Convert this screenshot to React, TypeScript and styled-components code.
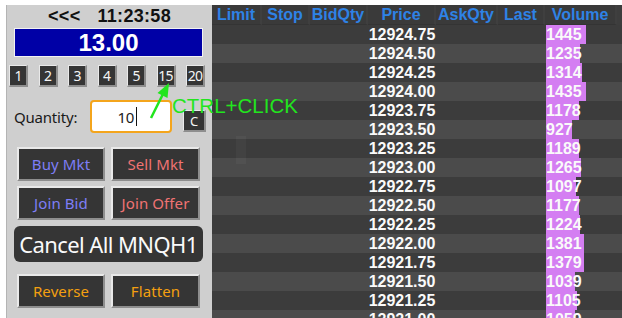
import React from "react";
import styled, { createGlobalStyle } from "styled-components";

const Global = createGlobalStyle`
  html, body { margin: 0; padding: 0; background: #ffffff; overflow: hidden; }
  body { font-family: "Liberation Sans", Arial, sans-serif; }
`;

const Page = styled.div`
  position: relative;
  width: 622px;
  height: 318px;
  padding: 5px 0 0 6px;
  box-sizing: border-box;
  display: flex;
  align-items: flex-start;
  overflow: hidden;
`;

const Panel = styled.div`
  width: 205px;
  flex: none;
  height: 330px;
  background: #cfcfcf;
  border-left: 1px solid #b4b4b4;
  display: flex;
  flex-direction: column;
`;

const Clock = styled.div`
  flex: none;
  height: 23px;
  display: flex;
  justify-content: center;
  align-items: center;
  gap: 17px;
  font-family: "Liberation Sans", Arial, sans-serif;
  font-weight: bold;
  font-size: 18px;
  letter-spacing: 0.3px;
  color: #111;
`;

const PriceBox = styled.div`
  flex: none;
  margin: 0 9px 0 7px;
  height: 27px;
  background: #0000a6;
  border: 1px solid #f2f2f2;
  display: flex;
  align-items: center;
  justify-content: center;
  color: #fff;
  font-family: "Liberation Sans", Arial, sans-serif;
  font-weight: bold;
  font-size: 24px;
`;

const NumRow = styled.div`
  flex: none;
  margin: 8px 0 0 2px;
  width: 196px;
  height: 22px;
  display: flex;
  justify-content: space-between;
`;

const bevel = `
  box-sizing: border-box;
  background: #353535;
  border-style: solid;
  border-color: #e9e9e9 #8e8e8e #8e8e8e #e9e9e9;
`;

const NumButton = styled.div`
  ${bevel}
  width: 19px;
  height: 22px;
  border-width: 1px 2px 2px 1px;
  display: flex;
  align-items: center;
  justify-content: center;
  color: #f4f4f4;
  font-family: "Noto Sans", sans-serif;
  font-size: 14px;
  letter-spacing: -0.8px;
`;

const QtyRow = styled.div`
  flex: none;
  margin-top: 13px;
  height: 33px;
  display: flex;
  align-items: center;
`;

const QtyLabel = styled.div`
  margin-left: 7px;
  width: 76px;
  font-family: "Noto Sans", sans-serif;
  font-size: 15px;
  letter-spacing: -0.2px;
  color: #1a1a1a;
`;

const QtyInput = styled.div`
  box-sizing: border-box;
  width: 82px;
  height: 33px;
  background: #fff;
  border: 2px solid #f4a51c;
  border-radius: 4px;
  display: flex;
  align-items: center;
  justify-content: flex-end;
  padding-right: 33px;
  font-family: "Noto Sans", sans-serif;
  font-size: 15px;
  letter-spacing: -0.3px;
  color: #1a1a1a;
`;

const Caret = styled.span`
  display: inline-block;
  width: 1px;
  height: 19px;
  margin-left: 2px;
  background: #111;
`;

const ClearButton = styled.div`
  ${bevel}
  margin: 9px 0 0 11px;
  width: 23px;
  height: 22px;
  border-width: 1px 2px 2px 1px;
  display: flex;
  align-items: center;
  justify-content: center;
  color: #f4f4f4;
  font-family: "Noto Sans", sans-serif;
  font-size: 13px;
`;

const ButtonGrid = styled.div<{ $top: number }>`
  flex: none;
  margin: ${(p) => p.$top}px 0 0 10px;
  display: grid;
  grid-template-columns: 88px 89px;
  column-gap: 6px;
  row-gap: 5px;
`;

const OrderButton = styled.div<{ $color: string }>`
  ${bevel}
  height: 34px;
  border-width: 2px;
  display: flex;
  align-items: center;
  justify-content: center;
  color: ${(p) => p.$color};
  font-family: "Noto Sans", sans-serif;
  font-size: 15px;
  letter-spacing: 0.1px;
`;

const CancelButton = styled.div`
  flex: none;
  margin: 6px 9px 0 7px;
  height: 36px;
  border-radius: 6px;
  background: #353535;
  display: flex;
  align-items: center;
  justify-content: center;
  color: #fafafa;
  font-family: "Noto Sans", sans-serif;
  font-size: 22px;
  letter-spacing: -0.6px;
`;

const Ladder = styled.div`
  flex: 1;
  height: 330px;
  background: #3c3c3c;
  display: flex;
  flex-direction: column;
`;

const cols = "50px 48px 58px 68px 62px 47px 72px 1fr";

const HeaderRow = styled.div`
  flex: none;
  height: 20px;
  display: grid;
  grid-template-columns: ${cols};
  background: #3d3d3d;
`;

const HeaderCell = styled.div`
  background: #3a3a3a;
  border-right: 2px solid #3f3f3f;
  border-bottom: 1px solid #343434;
  display: flex;
  align-items: center;
  justify-content: center;
  color: #2e82e6;
  font-family: "Liberation Sans", Arial, sans-serif;
  font-weight: bold;
  font-size: 16px;
`;

const Row = styled.div<{ $alt: boolean }>`
  flex: none;
  height: 19px;
  display: grid;
  grid-template-columns: ${cols};
  background: ${(p) => (p.$alt ? "#4b4b4b" : "#3c3c3c")};
`;

const PriceCell = styled.div`
  grid-column: 4;
  display: flex;
  align-items: center;
  justify-content: center;
  color: #fafafa;
  font-family: "Liberation Sans", Arial, sans-serif;
  font-weight: bold;
  font-size: 16px;
`;

const VolumeCell = styled.div`
  grid-column: 7;
  position: relative;
  display: flex;
  align-items: center;
  padding-left: 1px;
  color: #fafafa;
  font-family: "Liberation Sans", Arial, sans-serif;
  font-weight: bold;
  font-size: 16px;
`;

const VolumeBar = styled.div`
  position: absolute;
  left: 1px;
  top: 0;
  bottom: 0;
  background: #d47ef2;
`;

const VolumeText = styled.span`
  position: relative;
`;

const Hint = styled.div`
  position: absolute;
  left: 172px;
  top: 94px;
  color: #22e51e;
  font-family: "Liberation Sans", Arial, sans-serif;
  font-size: 20.5px;
  line-height: 23px;
`;

const ArrowSvg = styled.svg`
  position: absolute;
  left: 0;
  top: 0;
  pointer-events: none;
`;

const Ghost = styled.div`
  position: absolute;
  left: 236px;
  top: 136px;
  width: 10px;
  height: 28px;
  background: rgba(255, 255, 255, 0.035);
`;

const rows: [string, number][] = [
  ["12924.75", 1445],
  ["12924.50", 1235],
  ["12924.25", 1314],
  ["12924.00", 1435],
  ["12923.75", 1178],
  ["12923.50", 927],
  ["12923.25", 1189],
  ["12923.00", 1265],
  ["12922.75", 1097],
  ["12922.50", 1177],
  ["12922.25", 1224],
  ["12922.00", 1381],
  ["12921.75", 1379],
  ["12921.50", 1039],
  ["12921.25", 1105],
  ["12921.00", 1059],
];

const headers = ["Limit", "Stop", "BidQty", "Price", "AskQty", "Last", "Volume"];
const nums = ["1", "2", "3", "4", "5", "15", "20"];
const BLUE = "#7e7ef6";
const RED = "#f07373";
const ORANGE = "#f4a010";

export default function App() {
  return (
    <>
      <Global />
      <Page>
        <Panel>
          <Clock>
            <span>&lt;&lt;&lt;</span>
            <span>11:23:58</span>
          </Clock>
          <PriceBox>13.00</PriceBox>
          <NumRow>
            {nums.map((n) => (
              <NumButton key={n}>{n}</NumButton>
            ))}
          </NumRow>
          <QtyRow>
            <QtyLabel>Quantity:</QtyLabel>
            <QtyInput>
              10
              <Caret />
            </QtyInput>
            <ClearButton>C</ClearButton>
          </QtyRow>
          <ButtonGrid $top={14}>
            <OrderButton $color={BLUE}>Buy Mkt</OrderButton>
            <OrderButton $color={RED}>Sell Mkt</OrderButton>
            <OrderButton $color={BLUE}>Join Bid</OrderButton>
            <OrderButton $color={RED}>Join Offer</OrderButton>
          </ButtonGrid>
          <CancelButton>Cancel All MNQH1</CancelButton>
          <ButtonGrid $top={12}>
            <OrderButton $color={ORANGE}>Reverse</OrderButton>
            <OrderButton $color={ORANGE}>Flatten</OrderButton>
          </ButtonGrid>
        </Panel>
        <Ladder>
          <HeaderRow>
            {headers.map((h) => (
              <HeaderCell key={h}>{h}</HeaderCell>
            ))}
          </HeaderRow>
          {rows.map(([price, vol], i) => (
            <Row key={price} $alt={i % 2 === 1}>
              <PriceCell>{price}</PriceCell>
              <VolumeCell>
                <VolumeBar style={{ width: Math.round((vol / 1445) * 40) }} />
                <VolumeText>{vol}</VolumeText>
              </VolumeCell>
            </Row>
          ))}
        </Ladder>
        <Ghost />
        <Hint>CTRL+CLICK</Hint>
        <ArrowSvg width="622" height="318" viewBox="0 0 622 318">
          <line x1="151" y1="118" x2="163" y2="94" stroke="#22e51e" strokeWidth="2.5" />
          <polygon points="169,83 167.5,98 157.5,93" fill="#22e51e" />
        </ArrowSvg>
      </Page>
    </>
  );
}
